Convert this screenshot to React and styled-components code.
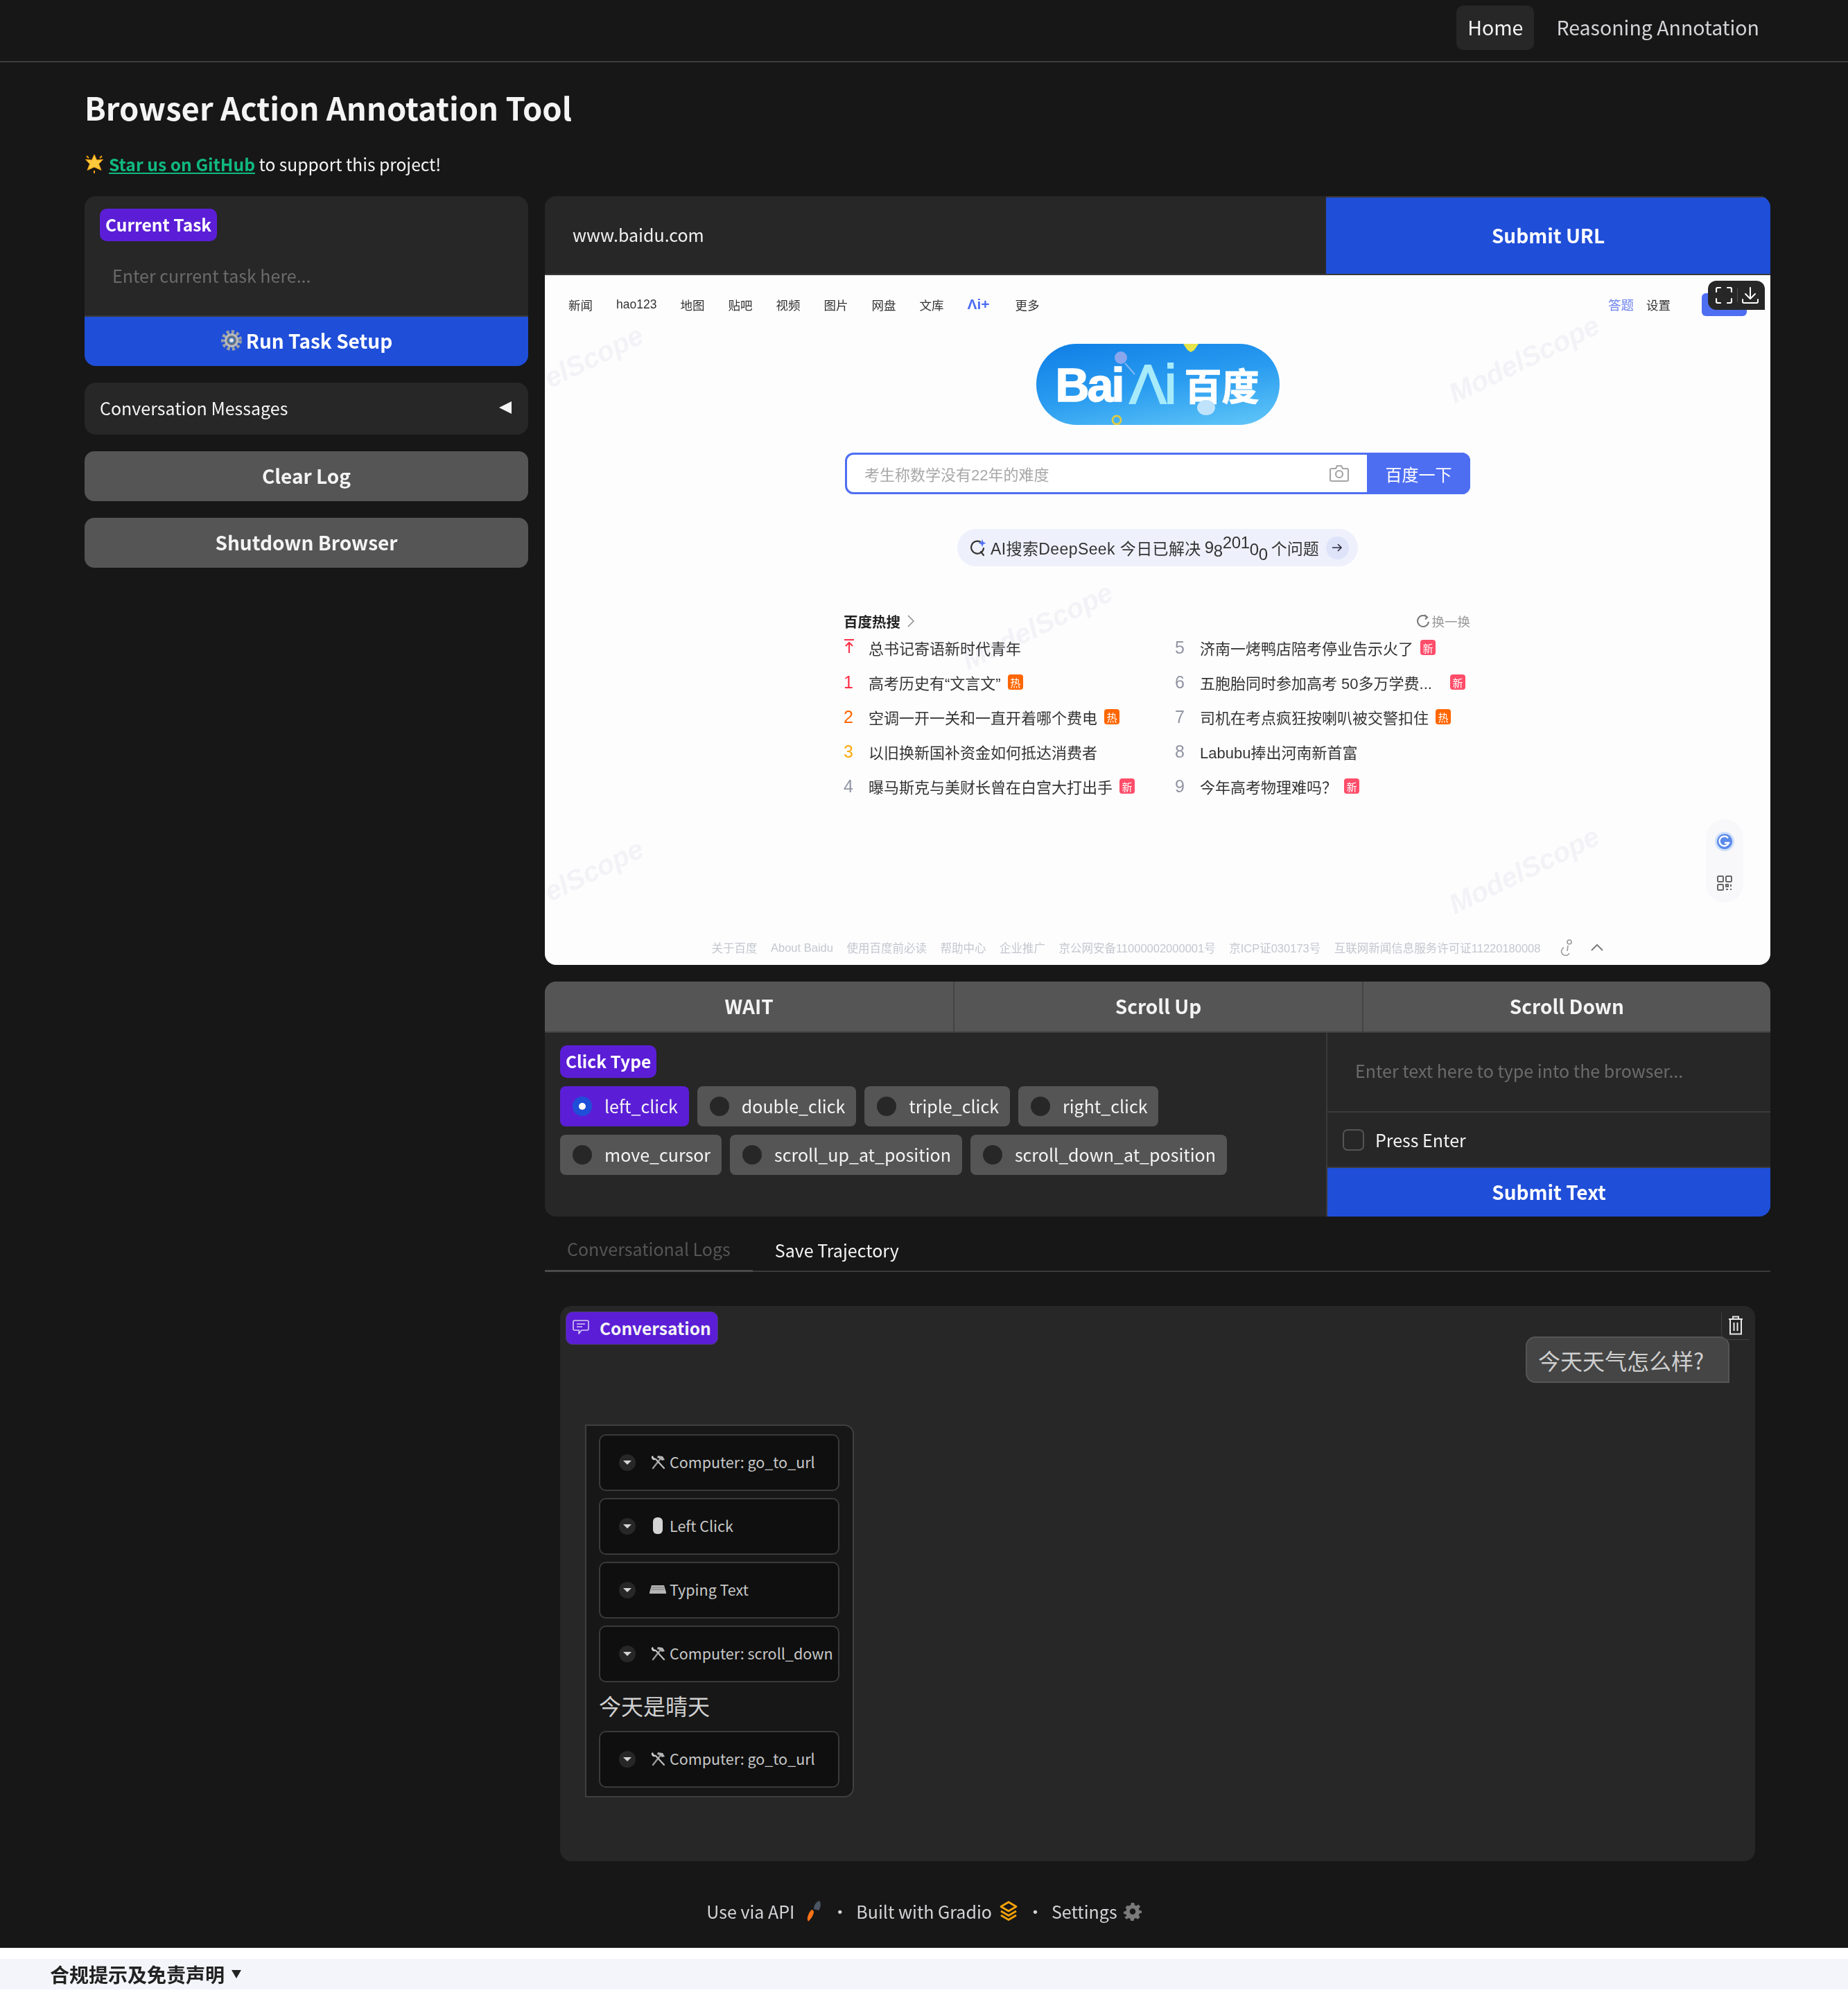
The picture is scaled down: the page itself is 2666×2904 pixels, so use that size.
import React from 'react';
import styled, { createGlobalStyle } from 'styled-components';

const Global = createGlobalStyle`
  html, body { margin: 0; padding: 0; background: #171717; }
  body { font-family: "Noto Sans CJK SC", "Noto Sans", sans-serif; color: #f4f4f5; }
  * { box-sizing: border-box; }
`;

const Page = styled.div`
  width: 2666px;
  height: 2904px;
  overflow: hidden;
  background: #171717;
  display: flex;
  flex-direction: column;
`;

const TopNav = styled.nav`
  height: 90px;
  flex: none;
  display: flex;
  justify-content: flex-end;
  align-items: flex-start;
  gap: 16px;
  padding: 8px 112px 0 0;
  border-bottom: 2px solid #3d3d3d;
`;

const NavItem = styled.div`
  height: 64px;
  padding: 0 16px 3px;
  display: flex;
  align-items: center;
  border-radius: 10px;
  font-size: 28.500px;
  color: ${p => (p.$active ? '#f4f4f5' : '#d4d4d8')};
  background: ${p => (p.$active ? '#272727' : 'transparent')};
`;

const Main = styled.main`
  flex: none;
  padding: 0 112px 0 122px;
`;

const Title = styled.h1`
  margin: 0;
  height: 120px;
  padding-top: 29px;
  font-size: 45.300px;
  line-height: 70px;
  font-weight: 700;
  color: #f4f4f5;
`;

const StarRow = styled.div`
  height: 73px;
  display: flex;
  align-items: center;
  gap: 7px;
  font-size: 24.600px;
  padding-bottom: 22px;
`;

const GitLink = styled.span`
  color: #10b981;
  font-weight: 700;
  text-decoration: underline;
`;

const Columns = styled.div`
  display: grid;
  grid-template-columns: 640px 1768px;
  gap: 24px;
  align-items: start;
`;

const LeftCol = styled.div`
  display: flex;
  flex-direction: column;
  gap: 24px;
`;

const RightCol = styled.div`
  display: flex;
  flex-direction: column;
`;

const TaskCard = styled.section`
  height: 245px;
  background: #272727;
  border-radius: 16px;
  overflow: hidden;
  display: flex;
  flex-direction: column;
  padding-top: 18px;
`;

const Tag = styled.span`
  align-self: flex-start;
  height: 47px;
  margin-left: ${p => p.$inset || 0}px;
  padding: 0 8px 3px;
  display: inline-flex;
  align-items: center;
  background: #5b1ed6;
  border-radius: 10px;
  font-size: 24.500px;
  font-weight: 700;
  color: #fff;
`;

const Placeholder = styled.div`
  flex: 1;
  display: flex;
  align-items: center;
  padding: 0 0 10px 40px;
  font-size: 25px;
  color: #6b6b6b;
`;

const PrimaryButton = styled.button`
  border: 0;
  width: 100%;
  height: ${p => p.$height}px;
  flex: none;
  display: flex;
  align-items: center;
  justify-content: center;
  gap: 5px;
  padding: 0 0 3px;
  background: #1f4ed8;
  color: #fff;
  font: 700 28px "Noto Sans CJK SC", sans-serif;
  border-top: 2px solid #3a3a3a;
`;

const Collapsed = styled.div`
  height: 75px;
  background: #272727;
  border-radius: 16px;
  padding: 0 24px 3px 22px;
  display: flex;
  align-items: center;
  justify-content: space-between;
  font-size: 25px;
`;

const Caret = styled.span`
  width: 0;
  height: 0;
  border-top: 9px solid transparent;
  border-bottom: 9px solid transparent;
  border-right: 18px solid #f4f4f5;
`;

const GrayButton = styled.button`
  border: 0;
  height: 72px;
  padding: 0 0 3px;
  background: #555;
  color: #f4f4f5;
  border-radius: 14px;
  font: 700 28px "Noto Sans CJK SC", sans-serif;
`;

const UrlRow = styled.div`
  height: 114px;
  display: grid;
  grid-template-columns: 1127px 641px;
  border-radius: 16px 16px 0 0;
  overflow: hidden;
  background: #272727;
  border-bottom: 2px solid #3a3a3a;
`;

const UrlValue = styled.div`
  display: flex;
  align-items: center;
  padding: 0 0 3px 40px;
  font-size: 25px;
  color: #f0f0f0;
`;

/* embedded page snapshot */
const Shot = styled.div`
  position: relative;
  height: 995px;
  background: #fdfdfe;
  border-radius: 0 0 16px 16px;
  overflow: hidden;
  display: flex;
  flex-direction: column;
  align-items: center;
  font-family: "Liberation Sans", "Noto Sans CJK SC", sans-serif;
`;

const ShotBar = styled.div`
  width: 100%;
  height: 84px;
  flex: none;
  display: flex;
  justify-content: space-between;
  align-items: center;
  padding: 0 34px;
  font-size: 17.500px;
  color: #333;
`;

const ShotLinks = styled.div`
  display: flex;
  align-items: center;
  gap: ${p => p.$gap}px;
`;

const ShotAi = styled.span`
  font-weight: 700;
  font-size: 21px;
  margin-right: 3px;
  color: #4e6ef2;
`;

const BlueLink = styled.span`
  color: #6f84ee;
  font-size: 18.500px;
`;

const LoginButton = styled.span`
  width: 65px;
  height: 33px;
  margin-left: 27px;
  border-radius: 6px;
  background: #4e6ef2;
`;

const Logo = styled.div`
  position: relative;
  flex: none;
  width: 351px;
  height: 117px;
  margin-top: 15px;
  border-radius: 58px;
  background: linear-gradient(170deg, #0f7ee6 0%, #2a9cf0 50%, #62c8f8 100%);
  display: flex;
  align-items: center;
  padding-left: 28px;
  color: #fff;
  font-weight: 700;
  white-space: nowrap;
  overflow: hidden;
`;

const LogoBai = styled.span`
  font-size: 68px;
  letter-spacing: -3px;
  -webkit-text-stroke: 1.500px #fff;
`;

const LogoAi = styled.span`
  font-size: 80px;
  font-weight: 400;
  margin-left: 10px;
  letter-spacing: -3px;
  color: #a7ebfb;
  -webkit-text-stroke: 2px #a7ebfb;
`;

const LogoCn = styled.span`
  font: 700 54px "Noto Sans CJK SC", sans-serif;
  margin-left: 14px;
  -webkit-text-stroke: 1px #fff;
`;

const LogoBits = styled.svg`
  position: absolute;
  left: 0;
  top: 0;
`;

const Search = styled.div`
  flex: none;
  width: 902px;
  height: 60px;
  margin-top: 40px;
  display: flex;
  border: 3px solid #4e6ef2;
  border-radius: 12px;
  background: #fff;
  align-items: center;
  padding-left: 25px;
  color: #a8a8a8;
  font-size: 22px;
`;

const SearchText = styled.span`
  flex: 1;
`;

const SearchButton = styled.span`
  width: 149px;
  height: 60px;
  margin: -3px -3px -3px 26px;
  background: #4e6ef2;
  border-radius: 0 12px 12px 0;
  display: flex;
  align-items: center;
  justify-content: center;
  color: #fff;
  font-size: 24px;
`;

const AiPill = styled.div`
  flex: none;
  width: 578px;
  height: 54px;
  margin-top: 50px;
  border-radius: 27px;
  background: #eef1fb;
  display: flex;
  align-items: center;
  padding-left: 19px;
  gap: 5px;
  font-size: 23px;
  color: #333;
  white-space: nowrap;
`;

const AiLead = styled.span`
  letter-spacing: 0.400px;
`;

const Rolling = styled.span`
  display: inline-flex;
  height: 44px;
  overflow: hidden;
  align-items: center;
  font-size: 24px;
`;

const Digit = styled.span`
  width: 13px;
  transform: translateY(${p => p.$y || 0}px);
`;

const ArrowDot = styled.span`
  width: 33px;
  height: 33px;
  border-radius: 50%;
  background: #dfe3fa;
  display: flex;
  align-items: center;
  justify-content: center;
  margin-left: 5px;
`;

const Hot = styled.div`
  flex: none;
  width: 904px;
  margin: 63px 2px 0 0;
`;

const HotHead = styled.div`
  height: 32px;
  display: flex;
  align-items: center;
  justify-content: space-between;
`;

const HotTitle = styled.span`
  display: flex;
  align-items: center;
  gap: 10px;
  font-size: 20.500px;
  font-weight: 700;
  color: #222;
`;

const Refresh = styled.span`
  display: flex;
  align-items: center;
  gap: 2px;
  font-size: 18.500px;
  color: #9a9a9a;
`;

const HotGrid = styled.div`
  display: grid;
  margin-top: -3px;
  grid-template-columns: 478px 426px;
  grid-auto-flow: column;
  grid-template-rows: repeat(5, 50px);
`;

const HotRow = styled.div`
  display: flex;
  align-items: center;
  font-size: 22px;
  color: #333;
  white-space: nowrap;
`;

const Rank = styled.span`
  width: 36px;
  flex: none;
  font-size: 25px;
  color: ${p => p.$color || '#9195a3'};
`;

const Badge = styled.span`
  width: 22px;
  height: 22px;
  margin-left: ${p => p.$gap || 10}px;
  border-radius: 4px;
  display: inline-flex;
  align-items: center;
  justify-content: center;
  background: ${p => (p.$hot ? '#ff6600' : '#ff4d6a')};
  color: #fff;
  font-size: 15px;
`;

const Spacer = styled.div`
  flex: 1;
`;

const ShotFoot = styled.div`
  flex: none;
  height: 50px;
  display: flex;
  align-items: center;
  gap: 19.500px;
  font-size: 16.500px;
  color: #c4c7ce;
  white-space: nowrap;
`;

const FootIcon = styled.span`
  display: flex;
  margin-left: ${p => p.$gap}px;
`;

const SideFloat = styled.div`
  position: absolute;
  left: 1675px;
  top: 785px;
  width: 54px;
  height: 120px;
  border-radius: 27px;
  background: #f8f8fa;
  display: flex;
  flex-direction: column;
  align-items: center;
  justify-content: space-around;
`;

const Mark = styled.span`
  position: absolute;
  left: ${p => p.$x}px;
  top: ${p => p.$y}px;
  transform: rotate(-26deg);
  font: italic 700 40px "Liberation Sans", sans-serif;
  color: #f5f5f8;
  mix-blend-mode: multiply;
  pointer-events: none;
`;

const ShotTools = styled.div`
  position: absolute;
  left: 1678px;
  top: 8px;
  width: 82px;
  height: 42px;
  background: #272727;
  border-radius: 12px 12px 0 12px;
  display: flex;
  align-items: center;
  justify-content: space-between;
  padding: 0 9px 0 11px;
`;

const ToolRule = styled.span`
  width: 1px;
  height: 20px;
  background: #555;
`;

const Actions = styled.section`
  margin-top: 24px;
  height: 339px;
  background: #272727;
  border-radius: 16px;
  overflow: hidden;
`;

const ActionButtons = styled.div`
  height: 74px;
  display: grid;
  grid-template-columns: repeat(3, 1fr);
  background: #555;
  border-bottom: 2px solid #3f3f3f;
`;

const ActionButton = styled.div`
  display: flex;
  align-items: center;
  justify-content: center;
  padding-bottom: 3px;
  font-size: 28px;
  font-weight: 700;
  border-left: ${p => (p.$first ? 0 : '2px solid #444')};
`;

const ActionBody = styled.div`
  height: 265px;
  display: grid;
  grid-template-columns: 1127px 641px;
`;

const ClickBox = styled.div`
  padding: 18px 22px;
  display: flex;
  flex-direction: column;
  align-items: flex-start;
  gap: 12px;
`;

const RadioWrap = styled.div`
  display: flex;
  flex-wrap: wrap;
  gap: 12px;
`;

const RadioPill = styled.div`
  height: 58px;
  padding: 0 16px 3px 18px;
  display: flex;
  align-items: center;
  gap: 18px;
  border-radius: 8px;
  font-size: 25px;
  background: ${p => (p.$on ? '#5b1ed6' : '#555')};
`;

const RadioDot = styled.span`
  width: 28px;
  height: 28px;
  margin-top: 3px;
  border-radius: 50%;
  flex: none;
  background: ${p => (p.$on ? '#1f4ed8' : '#272727')};
  display: flex;
  align-items: center;
  justify-content: center;
  &::after {
    content: '';
    width: 10px;
    height: 10px;
    border-radius: 50%;
    background: ${p => (p.$on ? '#fff' : 'transparent')};
  }
`;

const TypeBox = styled.div`
  display: flex;
  flex-direction: column;
  border-left: 2px solid #3a3a3a;
`;

const TypeInput = styled.div`
  height: 115px;
  border-bottom: 2px solid #3a3a3a;
  display: flex;
  align-items: center;
  padding: 0 0 6px 40px;
  font-size: 25px;
  color: #6b6b6b;
`;

const EnterRow = styled.div`
  height: 78px;
  display: flex;
  align-items: center;
  gap: 16px;
  padding-left: 22px;
  font-size: 25px;
`;

const CheckBox = styled.span`
  width: 31px;
  height: 31px;
  border: 2px solid #555;
  border-radius: 7px;
`;

const TabBar = styled.div`
  margin-top: 35px;
  height: 45px;
  display: flex;
  border-bottom: 2px solid #3a3a3a;
  font-size: 25px;
`;

const Tab = styled.div`
  height: 45px;
  padding: 0 32px 20px;
  display: flex;
  align-items: center;
  color: ${p => (p.$dim ? '#555' : '#f4f4f5')};
  border-bottom: ${p => (p.$dim ? '3px solid #4a4a4a' : 0)};
`;

const Chat = styled.section`
  position: relative;
  margin: 49px 22px 0;
  height: 801px;
  background: #272727;
  border-radius: 16px;
  padding: 44px 37px 0 36px;
  display: flex;
  flex-direction: column;
`;

const ChatTag = styled.div`
  position: absolute;
  left: 8px;
  top: 8px;
  height: 48px;
  padding: 0 9px 2px;
  display: flex;
  align-items: center;
  gap: 15px;
  background: #5b1ed6;
  border-radius: 10px;
  border: 1px solid #4a3a70;
  font-size: 24.500px;
  font-weight: 700;
`;

const TrashTab = styled.div`
  position: absolute;
  right: 8px;
  top: 8px;
  width: 41px;
  height: 41px;
  border-left: 1px solid #3f3f3f;
  border-bottom: 1px solid #3f3f3f;
  border-radius: 0 0 0 10px;
  display: flex;
  align-items: center;
  justify-content: center;
`;

const UserBubble = styled.div`
  align-self: flex-end;
  width: 294px;
  height: 67px;
  padding-left: 16px;
  display: flex;
  align-items: center;
  background: #454545;
  border: 2px solid #555;
  border-radius: 14px 14px 0 14px;
  font-size: 32px;
  color: #cfcfcf;
`;

const BotBubble = styled.div`
  margin-top: 60px;
  width: 388px;
  padding: 12px 19px 12px 18px;
  display: flex;
  flex-direction: column;
  gap: 10px;
  background: #171717;
  border: 2px solid #3f3f3f;
  border-radius: 0 14px 14px 0;
`;

const ToolCall = styled.div`
  height: 82px;
  display: flex;
  align-items: center;
  padding: 0 0 3px 27px;
  background: #0f0f0f;
  border: 2px solid #3a3a3a;
  border-radius: 10px;
  font-size: 21.500px;
  color: #c8c8c8;
  white-space: nowrap;
`;

const ToolChevron = styled.span`
  width: 24px;
  height: 24px;
  border-radius: 50%;
  background: #272727;
  display: flex;
  align-items: center;
  justify-content: center;
  margin: 3px 20px 0 0;
  flex: none;
  &::after {
    content: '';
    border-left: 6px solid transparent;
    border-right: 6px solid transparent;
    border-top: 6px solid #d4d4d4;
  }
`;

const ToolGlyph = styled.span`
  width: 24px;
  margin-right: 5px;
  display: flex;
  justify-content: center;
  flex: none;
`;

const BotText = styled.div`
  height: 50px;
  padding-bottom: 4px;
  display: flex;
  align-items: center;
  font-size: 32px;
  color: #d0d0d0;
`;

const Footer = styled.footer`
  flex: 1;
  display: flex;
  align-items: center;
  justify-content: center;
  gap: 9px;
  padding: 18px 0 0;
  font-size: 25px;
  color: #d4d4d8;
`;

const FootDot = styled.span`
  margin: 0 2px;
`;

const RocketWrap = styled.span`
  display: flex;
  margin-left: 7px;
`;

const Disclaimer = styled.div`
  height: 94px;
  flex: none;
  padding-top: 16px;
  background: #fff;
`;

const DisclaimerBand = styled.div`
  height: 44px;
  background: #f4f5fa;
  display: flex;
  align-items: center;
  gap: 10px;
  padding-left: 72px;
  font-size: 28px;
  font-weight: 700;
  color: #222;
`;

const DownMark = styled.span`
  border-left: 7px solid transparent;
  border-right: 7px solid transparent;
  border-top: 12px solid #222;
`;

const StarIcon = () => (
  <svg width="28" height="28" viewBox="0 0 28 28">
    <path d="M14 1l3.500 8 9-1-6 6.500 3.500 9-10-4.500L4 23.500l3.500-9-6-6.500 9 1z" fill="#ffc93c" stroke="#f59e0b" strokeWidth="1" />
    <path d="M14 24v4M3 3l3 3M25 3l-3 3" stroke="#f59e0b" strokeWidth="2" />
  </svg>
);

const GearEmoji = () => (
  <svg width="32" height="32" viewBox="0 0 32 32">
    <circle cx="16" cy="16" r="12" fill="none" stroke="#9aa0a6" strokeWidth="6" strokeDasharray="4 3" />
    <circle cx="16" cy="16" r="10" fill="#b9bdc2" />
    <circle cx="16" cy="16" r="7" fill="#70757b" />
    <circle cx="16" cy="16" r="4" fill="#dfe3e8" stroke="#3d6fb5" strokeWidth="2" />
  </svg>
);

const MaximizeIcon = () => (
  <svg width="24" height="24" viewBox="0 0 24 24" fill="none" stroke="#fff" strokeWidth="2.200" strokeLinecap="round" strokeLinejoin="round">
    <path d="M7 1H3a2 2 0 0 0-2 2v4M17 1h4a2 2 0 0 1 2 2v4M1 17v4a2 2 0 0 0 2 2h4M23 17v4a2 2 0 0 1-2 2h-4" />
  </svg>
);

const DownloadIcon = () => (
  <svg width="24" height="24" viewBox="0 0 24 24" fill="none" stroke="#fff" strokeWidth="2" strokeLinecap="round" strokeLinejoin="round">
    <path d="M12 1v15M5 10l7 7 7-7M1 18v3a2 2 0 0 0 2 2h18a2 2 0 0 0 2-2v-3" />
  </svg>
);

const CameraIcon = () => (
  <svg width="28" height="26" viewBox="0 0 28 26" fill="none" stroke="#a5a5a5" strokeWidth="2.200">
    <path d="M3 6h6l2-4h6l2 4h6a2 2 0 0 1 2 2v14a2 2 0 0 1-2 2H3a2 2 0 0 1-2-2V8a2 2 0 0 1 2-2z" />
    <circle cx="14" cy="14" r="5" />
  </svg>
);

const AiSearchIcon = () => (
  <svg width="24" height="26" viewBox="0 0 24 26" fill="none">
    <path d="M14 4.500A9 9 0 1 0 19 14" stroke="#333" strokeWidth="2.200" strokeLinecap="round" />
    <path d="M15 19l4 5" stroke="#333" strokeWidth="2.200" strokeLinecap="round" />
    <path d="M17 1l1.500 4 4 1.500-4 1.500-1.500 4-1.500-4-4-1.500 4-1.500z" fill="#4e6ef2" />
  </svg>
);

const ArrowIcon = () => (
  <svg width="16" height="14" viewBox="0 0 16 14" fill="none" stroke="#2a2a3a" strokeWidth="1.600">
    <path d="M1 7h13M9 2l5 5-5 5" />
  </svg>
);

const TopIcon = () => (
  <svg width="16" height="22" viewBox="0 0 16 22" fill="none" stroke="#fe2d46" strokeWidth="2">
    <path d="M1 2h14M8 7v14M3 11l5-5 5 5" />
  </svg>
);

const ChevronIcon = () => (
  <svg width="10" height="18" viewBox="0 0 10 18" fill="none" stroke="#8a8a8a" strokeWidth="1.500">
    <path d="M1 1l8 8-8 8" />
  </svg>
);

const RefreshIcon = () => (
  <svg width="20" height="20" viewBox="0 0 20 20" fill="none" stroke="#777" strokeWidth="2">
    <path d="M16 4.500A8 8 0 1 0 18 11" />
    <path d="M12 1l4 3.500-3 3" />
  </svg>
);

const AccessIcon = () => (
  <svg width="20" height="24" viewBox="0 0 20 24" fill="none" stroke="#9a9a9a" strokeWidth="1.600">
    <circle cx="14" cy="4" r="3" />
    <path d="M12 9l-1 8M6 12a6 6 0 1 0 8 8" />
  </svg>
);

const UpIcon = () => (
  <svg width="18" height="10" viewBox="0 0 18 10" fill="none" stroke="#777" strokeWidth="1.800">
    <path d="M1 9l8-8 8 8" />
  </svg>
);

const AssistantIcon = () => (
  <svg width="30" height="30" viewBox="0 0 30 30">
    <circle cx="15" cy="15" r="14" fill="#cfe0fb" />
    <circle cx="15" cy="15" r="11" fill="#5b8aea" />
    <path d="M20 10a7 7 0 1 0 1 7h-6" fill="none" stroke="#fff" strokeWidth="2.400" />
  </svg>
);

const QrIcon = () => (
  <svg width="24" height="24" viewBox="0 0 24 24" fill="none" stroke="#666" strokeWidth="2">
    <rect x="2" y="2" width="8" height="8" rx="1.500" />
    <rect x="14" y="2" width="8" height="8" rx="1.500" />
    <rect x="2" y="14" width="8" height="8" rx="1.500" />
    <path d="M14 14h3v3h-3zM21 14v3M14 21h3M21 20v2" />
  </svg>
);

const ChatIcon = () => (
  <svg width="24" height="22" viewBox="0 0 24 22" fill="none" stroke="#d8ccf5" strokeWidth="1.600" strokeLinejoin="round">
    <path d="M3 1h18a2 2 0 0 1 2 2v10a2 2 0 0 1-2 2h-8l-4 5 .500-5H3a2 2 0 0 1-2-2V3a2 2 0 0 1 2-2z" />
    <path d="M6 6h12M6 10h8" />
  </svg>
);

const TrashIcon = () => (
  <svg width="22" height="28" viewBox="0 0 22 28" fill="none" stroke="#e8e8e8" strokeWidth="2">
    <path d="M1 5h20M7 5V1.500h8V5M3 5v21.500h16V5M8.500 10v12M13.500 10v12" />
  </svg>
);

const ToolsIcon = () => (
  <svg width="24" height="24" viewBox="0 0 24 24" fill="none" strokeLinecap="round">
    <path d="M5 21L16 7" stroke="#9a9a9a" strokeWidth="2.400" />
    <path d="M12 3l7 1 3 5-4 1-3-3-4-1z" fill="#b5b5b5" />
    <path d="M21 21L9 8" stroke="#c0c0c0" strokeWidth="2.200" />
    <path d="M3 4a4 4 0 0 0 5 5l1-2-3-1-1-3z" fill="#d0d0d0" />
  </svg>
);

const MouseIcon = () => (
  <svg width="14" height="24" viewBox="0 0 14 24">
    <rect x="0" y="0" width="14" height="24" rx="6" fill="#d4d4d4" />
  </svg>
);

const KeyboardIcon = () => (
  <svg width="24" height="12" viewBox="0 0 24 12">
    <path d="M3 0h18l3 10v2H0v-2z" fill="#b5b5b5" />
    <path d="M3 3h18M2.500 6h19" stroke="#777" strokeWidth="1" />
  </svg>
);

const RocketIcon = () => (
  <svg width="26" height="32" viewBox="0 0 26 32">
    <path d="M20 1c3 4 2 10-1 14l-7-2c0-5 3-10 8-12z" fill="#4b5563" />
    <path d="M9 14c2 0 3 2 3 4-1 5-4 9-8 13-2-4-1-7 0-9 1-4 3-6 5-8z" fill="#f97316" />
  </svg>
);

const GradioIcon = () => (
  <svg width="30" height="30" viewBox="0 0 30 30" fill="none" stroke="#f5a20a" strokeWidth="2.800" strokeLinejoin="round">
    <path d="M15 2l11 6.500L15 15 4 8.500z" />
    <path d="M4 15l11 6.500L26 15" />
    <path d="M4 21l11 6.500L26 21" />
  </svg>
);

const SettingsIcon = () => (
  <svg width="26" height="28" viewBox="0 0 24 24">
    <path fillRule="evenodd" fill="#7a7a7a" d="M10 1h4l.600 3 2.300 1 2.600-1.700 2.800 2.800L20 8.700l1 2.300 3 .600v3l-3 .600-1 2.300 1.700 2.600-2.800 2.800-2.600-1.700-2.300 1-.600 3h-4l-.600-3-2.300-1-2.600 1.700-2.800-2.800L4 18.500l-1-2.300-3-.600v-3l3-.600 1-2.300-1.700-2.600 2.800-2.800L7.100 5l2.300-1zM12 8.500a4 4 0 1 0 0 8 4 4 0 0 0 0-8z" />
  </svg>
);

const hotLeft = [
  { rank: <TopIcon />, text: '总书记寄语新时代青年' },
  { rank: '1', color: '#fe2d46', text: '高考历史有“文言文”', hot: true },
  { rank: '2', color: '#ff6600', text: '空调一开一关和一直开着哪个费电', hot: true },
  { rank: '3', color: '#faa90e', text: '以旧换新国补资金如何抵达消费者' },
  { rank: '4', text: '曝马斯克与美财长曾在白宫大打出手', fresh: true },
];

const hotRight = [
  { rank: '5', text: '济南一烤鸭店陪考停业告示火了', fresh: true },
  { rank: '6', text: '五胞胎同时参加高考 50多万学费...', fresh: true, gap: 26 },
  { rank: '7', text: '司机在考点疯狂按喇叭被交警扣住', hot: true },
  { rank: '8', text: 'Labubu捧出河南新首富' },
  { rank: '9', text: '今年高考物理难吗？', fresh: true },
];

const clickTypes = ['left_click', 'double_click', 'triple_click', 'right_click', 'move_cursor', 'scroll_up_at_position', 'scroll_down_at_position'];

const watermarks = [
  { x: -6, y: 95, text: 'elScope' },
  { x: 1295, y: 99, text: 'ModelScope' },
  { x: 593, y: 484, text: 'ModelScope' },
  { x: -6, y: 836, text: 'elScope' },
  { x: 1295, y: 836, text: 'ModelScope' },
];

const calls = [
  { icon: <ToolsIcon />, label: 'Computer: go_to_url' },
  { icon: <MouseIcon />, label: 'Left Click' },
  { icon: <KeyboardIcon />, label: 'Typing Text' },
  { icon: <ToolsIcon />, label: 'Computer: scroll_down' },
];

function HotItem({ item }) {
  return (
    <HotRow>
      <Rank $color={item.color}>{item.rank}</Rank>
      {item.text}
      {item.hot && <Badge $hot>热</Badge>}
      {item.fresh && <Badge $gap={item.gap}>新</Badge>}
    </HotRow>
  );
}

function BaiduShot() {
  return (
    <Shot>
      <ShotBar>
        <ShotLinks $gap={34}>
          <span>新闻</span>
          <span>hao123</span>
          <span>地图</span>
          <span>贴吧</span>
          <span>视频</span>
          <span>图片</span>
          <span>网盘</span>
          <span>文库</span>
          <ShotAi>Λi+</ShotAi>
          <span>更多</span>
        </ShotLinks>
        <ShotLinks $gap={18}>
          <BlueLink>答题</BlueLink>
          <span>设置</span>
          <LoginButton />
        </ShotLinks>
      </ShotBar>
      <Logo>
        <LogoBits width="351" height="117" viewBox="0 0 351 117">
          <path d="M212 0h22l-6 9-5 3-5-3z" fill="#e7e54a" />
          <circle cx="122" cy="20" r="9" fill="#8aa7ee" />
          <path d="M128 28l14 16" stroke="#7fb8f0" strokeWidth="2" />
          <ellipse cx="245" cy="92" rx="13" ry="11" fill="#bfe3fb" />
          <circle cx="116" cy="110" r="6" fill="none" stroke="#d9c94a" strokeWidth="3" />
        </LogoBits>
        <LogoBai>Bai</LogoBai>
        <LogoAi>Λi</LogoAi>
        <LogoCn>百度</LogoCn>
      </Logo>
      <Search>
        <SearchText>考生称数学没有22年的难度</SearchText>
        <CameraIcon />
        <SearchButton>百度一下</SearchButton>
      </Search>
      <AiPill>
        <AiSearchIcon />
        <AiLead>AI搜索DeepSeek 今日已解决</AiLead>
        <Rolling>
          <Digit>9</Digit>
          <Digit $y={5}>8</Digit>
          <Digit $y={-7}>2</Digit>
          <Digit $y={-7}>0</Digit>
          <Digit $y={-7}>1</Digit>
          <Digit $y={3}>0</Digit>
          <Digit $y={10}>0</Digit>
        </Rolling>
        <span>个问题</span>
        <ArrowDot><ArrowIcon /></ArrowDot>
      </AiPill>
      <Hot>
        <HotHead>
          <HotTitle>百度热搜 <ChevronIcon /></HotTitle>
          <Refresh><RefreshIcon />换一换</Refresh>
        </HotHead>
        <HotGrid>
          {hotLeft.map((item, i) => <HotItem key={i} item={item} />)}
          {hotRight.map((item, i) => <HotItem key={i} item={item} />)}
        </HotGrid>
      </Hot>
      <Spacer />
      <ShotFoot>
        <span>关于百度</span>
        <span>About Baidu</span>
        <span>使用百度前必读</span>
        <span>帮助中心</span>
        <span>企业推广</span>
        <span>京公网安备11000002000001号</span>
        <span>京ICP证030173号</span>
        <span>互联网新闻信息服务许可证11220180008</span>
        <FootIcon $gap={8}><AccessIcon /></FootIcon>
        <FootIcon $gap={6}><UpIcon /></FootIcon>
      </ShotFoot>
      {watermarks.map((m, i) => <Mark key={i} $x={m.x} $y={m.y}>{m.text}</Mark>)}
      <SideFloat>
        <AssistantIcon />
        <QrIcon />
      </SideFloat>
      <ShotTools>
        <MaximizeIcon />
        <ToolRule />
        <DownloadIcon />
      </ShotTools>
    </Shot>
  );
}

export default function App() {
  return (
    <Page>
      <Global />
      <TopNav>
        <NavItem $active>Home</NavItem>
        <NavItem>Reasoning Annotation</NavItem>
      </TopNav>
      <Main>
        <Title>Browser Action Annotation Tool</Title>
        <StarRow>
          <StarIcon />
          <span><GitLink>Star us on GitHub</GitLink> to support this project!</span>
        </StarRow>
        <Columns>
          <LeftCol>
            <TaskCard>
              <Tag $inset={22}>Current Task</Tag>
              <Placeholder>Enter current task here...</Placeholder>
              <PrimaryButton $height={73}><GearEmoji />Run Task Setup</PrimaryButton>
            </TaskCard>
            <Collapsed>Conversation Messages<Caret /></Collapsed>
            <GrayButton>Clear Log</GrayButton>
            <GrayButton>Shutdown Browser</GrayButton>
          </LeftCol>
          <RightCol>
            <UrlRow>
              <UrlValue>www.baidu.com</UrlValue>
              <PrimaryButton $height={112}>Submit URL</PrimaryButton>
            </UrlRow>
            <BaiduShot />
            <Actions>
              <ActionButtons>
                <ActionButton $first>WAIT</ActionButton>
                <ActionButton>Scroll Up</ActionButton>
                <ActionButton>Scroll Down</ActionButton>
              </ActionButtons>
              <ActionBody>
                <ClickBox>
                  <Tag>Click Type</Tag>
                  <RadioWrap>
                    {clickTypes.map((t, i) => (
                      <RadioPill key={t} $on={i === 0}>
                        <RadioDot $on={i === 0} />
                        {t}
                      </RadioPill>
                    ))}
                  </RadioWrap>
                </ClickBox>
                <TypeBox>
                  <TypeInput>Enter text here to type into the browser...</TypeInput>
                  <EnterRow><CheckBox />Press Enter</EnterRow>
                  <PrimaryButton $height={72}>Submit Text</PrimaryButton>
                </TypeBox>
              </ActionBody>
            </Actions>
            <TabBar>
              <Tab $dim>Conversational Logs</Tab>
              <Tab>Save Trajectory</Tab>
            </TabBar>
            <Chat>
              <ChatTag><ChatIcon />Conversation</ChatTag>
              <TrashTab><TrashIcon /></TrashTab>
              <UserBubble>今天天气怎么样?</UserBubble>
              <BotBubble>
                {calls.map((c, i) => (
                  <ToolCall key={i}>
                    <ToolChevron />
                    <ToolGlyph>{c.icon}</ToolGlyph>
                    {c.label}
                  </ToolCall>
                ))}
                <BotText>今天是晴天</BotText>
                <ToolCall>
                  <ToolChevron />
                  <ToolGlyph><ToolsIcon /></ToolGlyph>
                  Computer: go_to_url
                </ToolCall>
              </BotBubble>
            </Chat>
          </RightCol>
        </Columns>
      </Main>
      <Footer>
        Use via API <RocketWrap><RocketIcon /></RocketWrap>
        <FootDot>·</FootDot>
        Built with Gradio <GradioIcon />
        <FootDot>·</FootDot>
        Settings <SettingsIcon />
      </Footer>
      <Disclaimer>
        <DisclaimerBand>合规提示及免责声明<DownMark /></DisclaimerBand>
      </Disclaimer>
    </Page>
  );
}
